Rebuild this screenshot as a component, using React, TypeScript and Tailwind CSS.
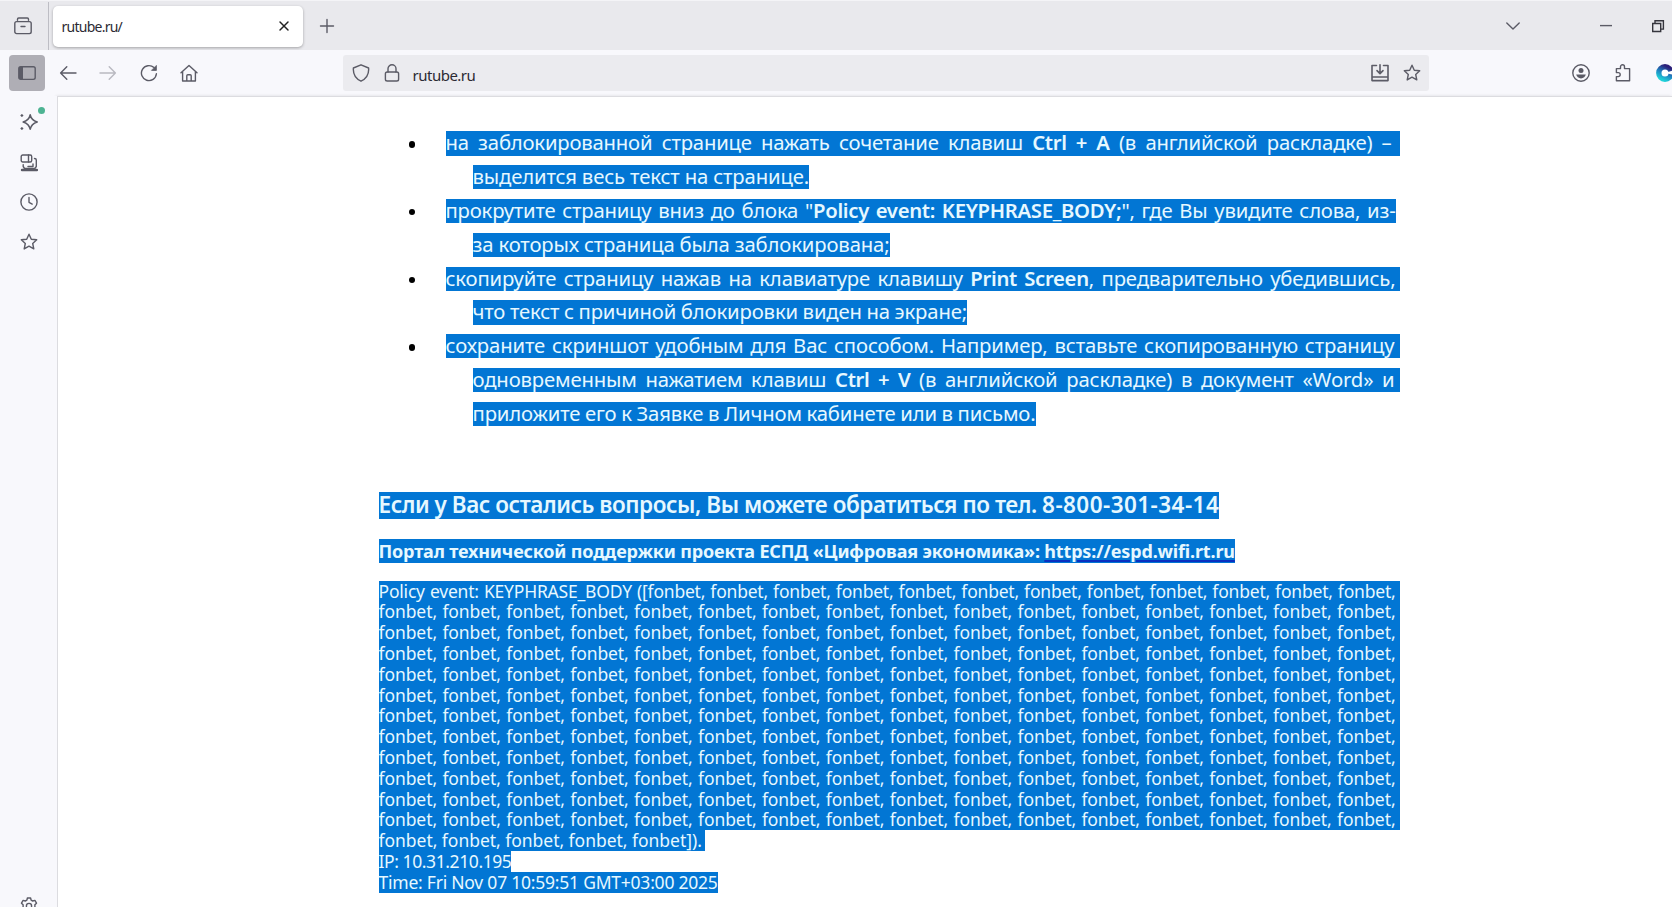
import React from 'react';

const WORDS_PER_ROW = Array.from({ length: 11 }, () => 'fonbet, '.repeat(16).trim());

type LineProps = { className?: string; children: React.ReactNode };

const Line: React.FC<LineProps> = ({ className = '', children }) => (
  <div className="h-[33.82px]">
    <div className={`h-[24.3px] leading-[22px] bg-[#0276d4] whitespace-nowrap ${className}`}>{children}</div>
  </div>
);

type IconProps = { className?: string; size?: number; children: React.ReactNode };

const Icon: React.FC<IconProps> = ({ className = '', size = 18, children }) => (
  <svg
    width={size}
    height={size}
    viewBox="0 0 18 18"
    fill="none"
    stroke="currentColor"
    strokeWidth="1.4"
    strokeLinecap="round"
    strokeLinejoin="round"
    className={`shrink-0 ${className}`}
  >
    {children}
  </svg>
);

const STAR = 'M9 1.2l2.3 5 5.4.6-4 3.7 1.1 5.4L9 13.2l-4.8 2.7 1.1-5.4-4-3.7 5.4-.6z';

const TabStrip = () => (
  <div className="flex h-[50px] items-center border-t border-[#f4f4f7] bg-[#e9e9ed] pt-px text-[#5b5b66]">
    <div className="flex h-full w-[49px] items-center border-r border-[#bdbdc4] pl-[13.5px]">
      <Icon>
        <path d="M3.5 3.2V2.2a1.2 1.2 0 0 1 1.2-1.2h8.6a1.2 1.2 0 0 1 1.2 1.2v1" />
        <rect x="0.8" y="4.6" width="16.4" height="12" rx="1.8" />
        <path d="M7 9.5h4" />
      </Icon>
    </div>
    <div className="ml-[4px] flex h-[41px] w-[249.5px] items-center justify-between rounded-[5px] bg-white pl-[8.5px] pr-[13px] text-[#2b2a33] shadow-[0_1px_3px_rgba(0,0,0,0.3)]">
      <span className="pt-px text-[14px] tracking-[-0.75px]">rutube.ru/</span>
      <Icon size={12} className="text-[#222]">
        <path strokeWidth="2.2" d="M3 3l12 12M15 3L3 15" />
      </Icon>
    </div>
    <Icon className="ml-[15px]">
      <path d="M9 2.5v13M2.5 9h13" />
    </Icon>
    <div className="ml-auto flex items-center">
      <Icon className="mr-[75.5px]">
        <path d="M2.8 6l6.2 6 6.2-6" />
      </Icon>
      <Icon className="mr-[34px]">
        <path strokeLinecap="butt" d="M3 8.6h12" />
      </Icon>
      <Icon className="mr-[5px] text-[#35353d]">
        <path strokeLinejoin="miter" d="M3.7 6.5h8v8h-8zM6 6V3.7h8.4v8.4H12" />
      </Icon>
    </div>
  </div>
);

const Toolbar = () => (
  <div className="flex h-[46px] items-center bg-[#f8f8fc] pt-[0.5px] text-[#5b5b66]">
    <div className="ml-[9px] flex h-9 w-9 shrink-0 items-center justify-center rounded-[4px] bg-[#afaeb5]">
      <Icon>
        <path fill="currentColor" stroke="none" d="M1 3h4v12H1z" />
        <rect x="0.8" y="2.8" width="16.4" height="12.6" rx="1.8" />
      </Icon>
    </div>
    <Icon className="ml-[14px]">
      <path d="M17 9H1.6M7.8 2.8L1.6 9l6.2 6.2" />
    </Icon>
    <Icon className="ml-[22px] text-[#b9b9c0]">
      <path d="M1 9h15.4M10.2 2.8L16.4 9l-6.2 6.2" />
    </Icon>
    <Icon className="ml-[23px]">
      <path d="M16.4 9.8a7.5 7.5 0 1 1-2.4-6.2" />
      <path fill="currentColor" strokeWidth="0.8" d="M16.4 1.8v4.6h-4.6z" />
    </Icon>
    <Icon className="ml-[22px]">
      <path d="M1 8.8l8-7.4 8 7.4M2.6 7.6V17h12.8V7.6M6.8 17v-5.2c0-.6.4-1 1-1h2.4c.6 0 1 .4 1 1V17" />
    </Icon>
    <div className="ml-[145px] flex h-9 w-[1086px] shrink-0 items-center rounded-[3px] bg-[#ebebef] pl-[8.5px] pr-[8px]">
      <Icon>
        <path d="M9 .8l7.6 3.2c.5 5.8-2.2 10.7-7.6 13.2C3.6 14.7.9 9.8 1.4 4z" />
      </Icon>
      <Icon className="ml-[13.5px]">
        <rect x="2.4" y="8" width="13.2" height="9" rx="1.8" />
        <path d="M5 8V4.8a4 4 0 0 1 8 0V8" />
      </Icon>
      <span className="ml-[11.5px] pt-[3px] text-[15px] tracking-[-0.5px] text-[#2b2a33]">rutube.ru</span>
      <Icon className="ml-auto">
        <path strokeWidth="1.6" d="M5.5 1.5H1V16.6h16V1.5h-4.5M1 13h16" />
        <path strokeWidth="1.6" d="M9 .8v8.4M6 6.6l3 3 3-3" />
      </Icon>
      <Icon className="ml-[14px]">
        <path d={STAR} />
      </Icon>
    </div>
    <Icon className="ml-[143px]">
      <circle cx="9" cy="9" r="8.2" />
      <circle cx="9" cy="6.6" r="2.5" fill="currentColor" stroke="none" />
      <path fill="currentColor" stroke="none" d="M4.2 10.6h9.6c-.5 2.3-2.4 3.8-4.8 3.8s-4.3-1.5-4.8-3.8z" />
    </Icon>
    <Icon className="ml-[23.5px]">
      <path d="M6.5 4.6V2.8a2 2 0 0 1 4 0v1.8h5.1v12.2H2.4v-4.2h1.8a2 2 0 0 0 0-4H2.4v-4z" />
    </Icon>
    <svg width="18" height="18" viewBox="0 0 18 18" className="ml-[24.5px] shrink-0">
      <defs>
        <linearGradient id="ring" x1="0.7" y1="0" x2="0.2" y2="1">
          <stop offset="0" stopColor="#2b1e78" />
          <stop offset="0.5" stopColor="#1f7fc0" />
          <stop offset="1" stopColor="#1fd0d8" />
        </linearGradient>
      </defs>
      <circle cx="9" cy="9" r="6.2" fill="#fff" stroke="url(#ring)" strokeWidth="5.4" />
      <path d="M9 9l9-3v5z" fill="#fff" />
    </svg>
  </div>
);

const Sidebar = () => (
  <div className="relative flex w-[57px] shrink-0 flex-col items-center bg-[#f8f8fc] pt-[17px] text-[#5b5b66]">
    <span className="absolute left-[38px] top-[11px] h-[7px] w-[7px] rounded-full bg-[#4db392]" />
    <Icon>
      <path
        strokeWidth="1.6"
        d="M10.2 1.8c.8 4 2.5 5.7 7 7.2-4.5 1.5-6.2 3.2-7 7.2-.8-4-2.5-5.7-7-7.2 4.5-1.5 6.2-3.2 7-7.2z"
      />
      <path d="M1.9 1.7v1.6M1.1 2.5h1.6M1.9 14.7v1.6M1.1 15.5h1.6" />
    </Icon>
    <Icon className="mt-[23px]">
      <rect x="1.2" y="1" width="10.5" height="7" rx="1.5" />
      <path d="M8.5 1v7M14.5 4.5c1.2 0 1.8.6 1.8 1.6v6.4l-1.5 2H4.5L3.2 12.5V10.6" />
      <path strokeWidth="2.4" d="M2 16h15" />
      <path d="M8 12.5h5V10" />
    </Icon>
    <Icon className="mt-[21px]">
      <circle cx="9" cy="9" r="8.1" />
      <path d="M9 4.5v4.8l3.2 1.8" />
    </Icon>
    <Icon className="mt-[22px]">
      <path d={STAR} />
    </Icon>
    <Icon className="mt-[645.5px]">
      <path d="M7.4 1h3.2l.5 2.2 1.6.8 2.2-.6 1.6 2.8-1.6 1.6v2.4l1.6 1.6-1.6 2.8-2.2-.6-1.6.8-.5 2.2H7.4L6.9 15l-1.6-.8-2.2.6L1.5 12l1.6-1.6V7.8L1.5 6.2l1.6-2.8 2.2.6 1.6-.8z" />
      <circle cx="9" cy="9" r="2.6" />
    </Icon>
  </div>
);

const Bullet = () => <span className="ml-[30px] mt-[10px] h-[6.5px] w-[6.5px] shrink-0 rounded-full bg-black" />;

const Instructions = () => (
  <ul className="text-[20.3px] tracking-[-0.15px] [word-spacing:-0.5px] [&_b]:font-semibold [&_b]:tracking-[-0.3px]">
    <li className="flex">
      <Bullet />
      <div className="ml-[30.5px]">
        <Line className="w-[954px] pr-[8px] tracking-[-0.2px] [text-align-last:justify]">
          на заблокированной странице нажать сочетание клавиш <b>Ctrl + A</b> (в английской раскладке) –
        </Line>
        <Line className="ml-[27px] w-[336.5px] [text-align-last:justify]">выделится весь текст на странице.</Line>
      </div>
    </li>
    <li className="flex">
      <Bullet />
      <div className="ml-[30.5px]">
        <Line className="w-[950px] tracking-[-0.2px] [text-align-last:justify]">
          прокрутите страницу вниз до блока "<b>Policy event: KEYPHRASE_BODY;</b>", где Вы увидите слова, из-
        </Line>
        <Line className="ml-[27px] w-[417px] [text-align-last:justify]">за которых страница была заблокирована;</Line>
      </div>
    </li>
    <li className="flex">
      <Bullet />
      <div className="ml-[30.5px]">
        <Line className="w-[954px] pr-[4px] [text-align-last:justify]">
          скопируйте страницу нажав на клавиатуре клавишу <b>Print Screen</b>, предварительно убедившись,
        </Line>
        <Line className="ml-[27px] w-[494.5px] [text-align-last:justify]">
          что текст с причиной блокировки виден на экране;
        </Line>
      </div>
    </li>
    <li className="flex">
      <Bullet />
      <div className="ml-[30.5px]">
        <Line className="w-[954px] pr-[5px] [text-align-last:justify]">
          сохраните скриншот удобным для Вас способом. Например, вставьте скопированную страницу
        </Line>
        <Line className="ml-[27px] w-[927px] pr-[5px] [text-align-last:justify]">
          одновременным нажатием клавиш <b>Ctrl + V</b> (в английской раскладке) в документ «Word» и
        </Line>
        <Line className="ml-[27px] w-[563px] [text-align-last:justify]">
          приложите его к Заявке в Личном кабинете или в письмо.
        </Line>
      </div>
    </li>
  </ul>
);

const PolicyEvent = () => (
  <div className="mt-[17.5px] text-[17.5px] leading-[20.8px] whitespace-nowrap">
    <div className="w-[1021px] bg-[#0276d4] pr-[4px] tracking-[-0.08px] [text-align-last:justify]">
      <p className="tracking-[-0.2px]">Policy event: KEYPHRASE_BODY ([{'fonbet, '.repeat(12).trim()}</p>
      {WORDS_PER_ROW.map((row, i) => (
        <p key={i}>{row}</p>
      ))}
    </div>
    <p className="w-fit bg-[#0276d4] pr-[3px] tracking-[-0.03px]">fonbet, fonbet, fonbet, fonbet, fonbet]).</p>
    <p className="w-fit bg-[#0276d4] tracking-[-0.41px]">IP: 10.31.210.195</p>
    <p className="w-fit bg-[#0276d4] tracking-[-0.23px]">Time: Fri Nov 07 10:59:51 GMT+03:00 2025</p>
  </div>
);

export default function App() {
  return (
    <div className="flex h-[907px] w-[1672px] flex-col overflow-hidden bg-white font-['Noto_Sans','Liberation_Sans',sans-serif]">
      <TabStrip />
      <Toolbar />
      <div className="flex min-h-0 flex-1">
        <Sidebar />
        <main className="min-w-0 flex-1 border-l border-t border-[#dcdce0] pl-[320.5px] pt-[34.3px] text-[#e6f8ff] shadow-[-1px_0_3px_rgba(0,0,0,0.12)]">
          <Instructions />
          <h2 className="mt-[56px] h-[27px] w-fit whitespace-nowrap bg-[#0276d4] text-[22.5px] font-semibold leading-[25px] tracking-[-0.45px]">
            Если у Вас остались вопросы, Вы можете обратиться по тел.{' '}
            <span className="tracking-[0.45px]">8-800-301-34-14</span>
          </h2>
          <p className="mt-[20px] h-[24.5px] w-fit whitespace-nowrap bg-[#0276d4] text-[18px] font-bold leading-[25px] tracking-[-0.16px]">
            Портал технической поддержки проекта ЕСПД «Цифровая экономика»:{' '}
            <a className="underline decoration-[#0a2fc0] decoration-2 underline-offset-2">https://espd.wifi.rt.ru</a>
          </p>
          <PolicyEvent />
        </main>
      </div>
    </div>
  );
}
